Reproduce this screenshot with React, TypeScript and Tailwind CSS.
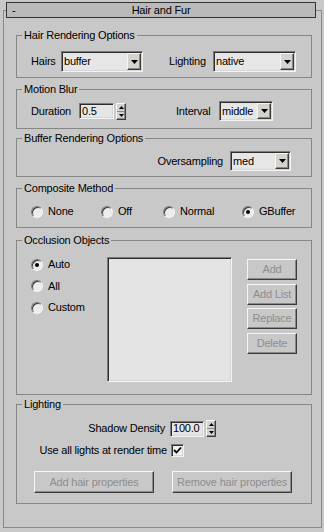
import React from "react";

// classic 3d edges
const sunken =
  "border border-t-[#7a7a7a] border-l-[#7a7a7a] border-b-[#f4f4f4] border-r-[#f4f4f4] shadow-[inset_1px_1px_0_#2e2e2e,inset_-1px_-1px_0_#d6d6d6]";
const raised =
  "border border-t-[#f6f6f6] border-l-[#f6f6f6] border-b-[#3c3c3c] border-r-[#3c3c3c] shadow-[inset_-1px_-1px_0_#8a8a8a]";

interface DropdownProps {
  value: string;
  className: string;
}

function Dropdown({ value, className }: DropdownProps) {
  return (
    <div className={`flex bg-[#e6e6e6] ${sunken} ${className}`}>
      <span className="flex flex-1 items-center pl-[2px] leading-none">{value}</span>
      <span
        className={`m-[1px] flex w-[14px] items-center justify-center self-stretch bg-[#d6d3ce] ${raised}`}
      >
        <svg width="7" height="4" viewBox="0 0 7 4">
          <polygon points="0,0 7,0 3.5,4" fill="#000" />
        </svg>
      </span>
    </div>
  );
}

interface SpinnerProps {
  value: string;
  className: string;
}

function Spinner({ value, className }: SpinnerProps) {
  return (
    <div className="flex items-center">
      <div className={`flex h-[16px] items-center bg-[#e6e6e6] pl-[2px] leading-none ${sunken} ${className}`}>
        {value}
      </div>
      <div className={`ml-[2px] flex h-[17px] w-[10px] flex-col bg-[#d6d3ce] ${raised}`}>
        <span className="flex flex-1 items-center justify-center border-b border-[#8a8a8a]">
          <svg width="5" height="3" viewBox="0 0 5 3">
            <polygon points="2.5,0 5,3 0,3" fill="#000" />
          </svg>
        </span>
        <span className="flex flex-1 items-center justify-center">
          <svg width="5" height="3" viewBox="0 0 5 3">
            <polygon points="0,0 5,0 2.5,3" fill="#000" />
          </svg>
        </span>
      </div>
    </div>
  );
}

interface RadioProps {
  label: string;
  checked?: boolean;
  className?: string;
}

function Radio({ label, checked = false, className = "" }: RadioProps) {
  return (
    <div className={`flex h-[13px] items-center ${className}`}>
      <span className="flex h-[12px] w-[12px] items-center justify-center rounded-full border border-t-[#7a7a7a] border-l-[#7a7a7a] border-b-[#f4f4f4] border-r-[#f4f4f4] bg-[#ececec] shadow-[inset_1px_1px_0_#3a3a3a]">
        {checked && <span className="h-[4px] w-[4px] rounded-full bg-black" />}
      </span>
      <span className="ml-[5px] leading-none">{label}</span>
    </div>
  );
}

function Checkbox({ className }: { className: string }) {
  return (
    <span className={`flex h-[13px] w-[13px] items-center justify-center bg-[#f0f0f0] ${sunken} ${className}`}>
      <svg width="9" height="9" viewBox="0 0 9 9">
        <path d="M1 4 L3.5 6.5 L8 1.5" stroke="#000" strokeWidth="1.8" fill="none" />
      </svg>
    </span>
  );
}

interface ButtonProps {
  children: React.ReactNode;
  className: string;
}

// all buttons in this rollout are greyed out
function Button({ children, className }: ButtonProps) {
  return (
    <div
      className={`flex items-center justify-center bg-[#c8c8c8] leading-none text-[#8e8e8e] ${raised} ${className}`}
    >
      {children}
    </div>
  );
}

interface GroupProps {
  title: string;
  className: string;
  children: React.ReactNode;
}

function Group({ title, className, children }: GroupProps) {
  return (
    <fieldset className={`min-w-0 border border-[#868686] ${className}`}>
      <legend className="ml-[5px] px-[2px] leading-[14px]">{title}</legend>
      {children}
    </fieldset>
  );
}

export default function App() {
  return (
    <div className="h-[532px] w-[324px] overflow-hidden bg-[#c8c8c8] font-['Liberation_Sans','Arial',sans-serif] text-[11px] tracking-[-0.2px] text-black">
      {/* Rollout frame */}
      <div className="ml-[3px] mt-[10px] h-[518px] w-[319px] border border-[#8a8a8a]">
        {/* Rollout title bar */}
        <div className="-mt-[9px] ml-[2px] flex h-[16px] w-[310px] items-center border border-[#333333] bg-[#bababa] leading-none">
          <span className="w-[20px] pl-[5px]">-</span>
          <span className="flex-1 pr-[20px] text-center">Hair and Fur</span>
        </div>

        <div className="ml-[12px] w-[296px]">
          <Group title="Hair Rendering Options" className="mt-[10px] h-[50px]">
            <div className="flex items-center pl-[14px] pt-[9px]">
              <span className="w-[30px]">Hairs</span>
              <Dropdown value="buffer" className="h-[21px] w-[82px]" />
              <span className="ml-[26px] w-[44px]">Lighting</span>
              <Dropdown value="native" className="h-[21px] w-[83px]" />
            </div>
          </Group>

          <Group title="Motion Blur" className="mt-[4px] h-[47px]">
            <div className="flex h-[20px] items-center pl-[14px] mt-[5px]">
              <span className="w-[48px]">Duration</span>
              <Spinner value="0.5" className="w-[35px]" />
              <span className="ml-[50px] w-[43px]">Interval</span>
              <Dropdown value="middle" className="h-[20px] w-[54px]" />
            </div>
          </Group>

          <Group title="Buffer Rendering Options" className="mt-[2px] h-[46px]">
            <div className="mt-[6px] flex h-[20px] items-center justify-end pr-[20px]">
              <span>Oversampling</span>
              <Dropdown value="med" className="ml-[7px] h-[20px] w-[61px]" />
            </div>
          </Group>

          <Group title="Composite Method" className="mt-[4px] h-[47px]">
            <div className="flex pl-[14px] pt-[10px]">
              <Radio label="None" className="w-[70px]" />
              <Radio label="Off" className="w-[62px]" />
              <Radio label="Normal" className="w-[79px]" />
              <Radio label="GBuffer" checked />
            </div>
          </Group>

          <Group title="Occlusion Objects" className="mt-[5px] h-[162px]">
            <div className="flex pl-[14px] pt-[10px]">
              <div className="flex w-[76px] flex-col gap-[8.5px] pt-[1px]">
                <Radio label="Auto" checked />
                <Radio label="All" />
                <Radio label="Custom" />
              </div>
              <div className={`h-[125px] w-[125px] bg-[#e4e4e4] ${sunken}`} />
              <div className="ml-[15px] flex flex-col gap-[3.5px] pt-[2px]">
                <Button className="h-[21px] w-[50px]">Add</Button>
                <Button className="h-[21px] w-[50px]">Add List</Button>
                <Button className="h-[21px] w-[50px]">Replace</Button>
                <Button className="h-[21px] w-[50px]">Delete</Button>
              </div>
            </div>
          </Group>

          <Group title="Lighting" className="mt-[2px] h-[107px]">
            <div className="pt-[9px]">
              <div className="flex h-[17px] items-center pl-[14px]">
                <span className="w-[134px] text-right">Shadow Density</span>
                <div className="ml-[5px]">
                  <Spinner value="100.0" className="w-[34px]" />
                </div>
              </div>
              <div className="mt-[7px] flex h-[13px] items-center pl-[14px]">
                <span className="w-[136px] text-right">Use all lights at render time</span>
                <Checkbox className="ml-[4px]" />
              </div>
              <div className="mt-[14px] flex gap-[18px] pl-[17px]">
                <Button className="h-[22px] w-[120px]">Add hair properties</Button>
                <Button className="h-[22px] w-[120px]">Remove hair properties</Button>
              </div>
            </div>
          </Group>
        </div>
      </div>
    </div>
  );
}
